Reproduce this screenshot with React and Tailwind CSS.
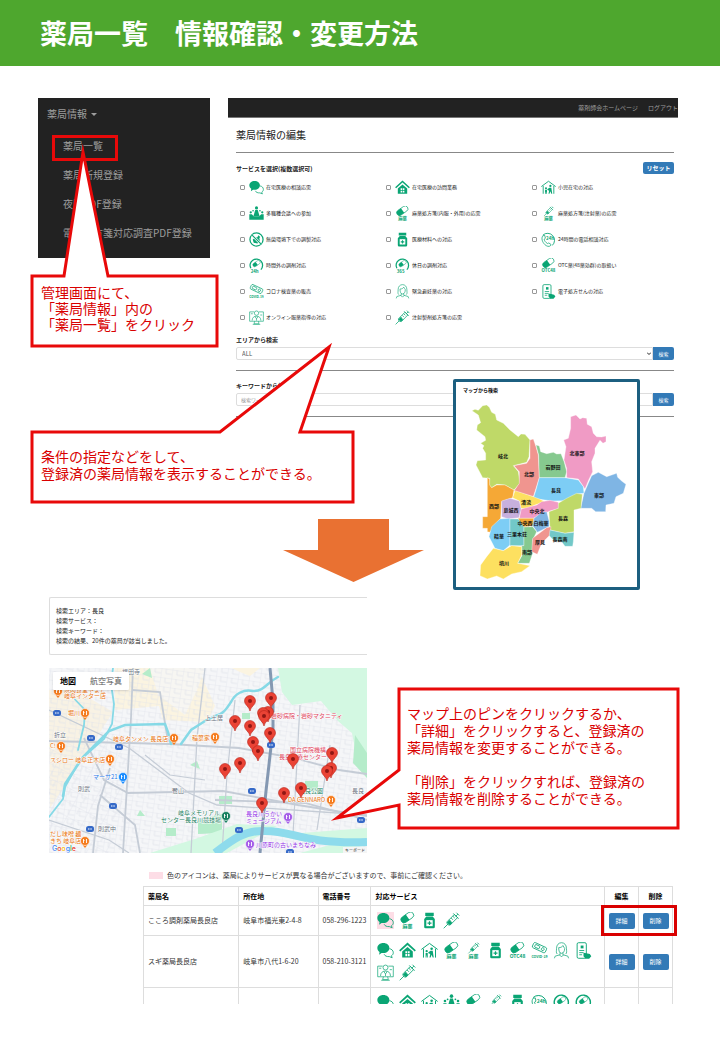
const services = [
  { icon: "chat", label: "在宅医療の相談応需" },
  { icon: "house", label: "在宅医療の訪問業務" },
  { icon: "family", label: "小児在宅の対応" },
  { icon: "meeting", label: "多職種会議への参加" },
  { icon: "capsule", label: "麻薬処方箋(内服・外用)の応需" },
  { icon: "injection", label: "麻薬処方箋(注射薬)の応需" },
  { icon: "sterile", label: "無菌環境下での調製対応" },
  { icon: "bottle", label: "医療材料への対応" },
  { icon: "phone", label: "24時間の電話相談対応" },
  { icon: "overtime", label: "時間外の調剤対応" },
  { icon: "holiday", label: "休日の調剤対応" },
  { icon: "otc", label: "OTC薬(48薬効群)の取扱い" },
  { icon: "covid", label: "コロナ検査薬の販売" },
  { icon: "woman", label: "緊急避妊薬の対応" },
  { icon: "eprescription", label: "電子処方せんの対応" },
  { icon: "online", label: "オンライン服薬指導の対応" },
  { icon: "syringe", label: "注射製剤処方箋の応需" },
];

const pharmacies = [
  {
    name: "こころ調剤薬局長良店",
    address: "岐阜市福光東2-4-8",
    tel: "058-296-1223",
    icons: ["chat", "capsule", "bottle", "syringe"],
    varies: ["chat"],
  },
  {
    name: "スギ薬局長良店",
    address: "岐阜市八代1-6-20",
    tel: "058-210-3121",
    icons: [
      "chat", "house", "family", "capsule", "injection", "bottle",
      "otc", "covid", "woman", "eprescription", "online", "syringe",
    ],
    varies: [],
  },
  {
    name: "",
    address: "",
    tel: "",
    icons: [
      "chat", "house", "family", "meeting", "capsule", "injection",
      "bottle", "phone", "overtime", "holiday",
    ],
    varies: [],
  },
];

// district outlines of the area map, three units to a pixel
const districts = [
  ["#bfd968", "66,107 75,103 85,106 98,92 110,90 118,97 125,112 136,118 140,135 160,145 180,165 205,185 213,177 225,178 240,195 237,245 230,262 190,272 205,290 210,325 192,345 165,330 140,328 125,338 118,330 119,310 98,308 78,270 82,257 107,255 107,235 98,220 102,212 92,205 107,196 105,185 80,165 82,150 92,143 85,120"],
  ["#f0958f", "240,195 250,192 258,215 265,240 268,308 258,340 250,365 192,348 208,325 208,290 192,272 230,265 240,250"],
  ["#86c98f", "258,210 268,213 272,230 290,236 310,232 320,237 333,236 343,262 350,290 345,308 268,308 266,240"],
  ["#f09bc5", "362,125 378,120 390,132 398,128 410,130 412,148 425,155 430,175 440,185 455,186 468,183 468,200 459,205 450,196 435,220 435,235 425,260 428,290 416,315 405,342 385,312 350,308 350,280 342,255 348,215 341,195 355,190 362,160"],
  ["#7dcdf5", "268,308 345,308 385,315 400,335 402,355 380,357 345,377 305,378 250,370 258,345"],
  ["#7fb5e4", "425,302 445,292 470,305 485,300 500,295 503,307 515,318 528,328 520,355 498,365 492,385 468,390 467,410 437,410 425,400 392,400 402,355 415,325"],
  ["#f5a836", "112,308 119,312 119,330 125,338 140,330 165,330 192,345 188,368 155,380 152,430 120,472 112,470 112,460 98,460 98,425 112,425"],
  ["#fde060", "195,347 250,365 270,373 285,380 255,390 230,402 212,400 208,378 188,368"],
  ["#c7b0dd", "155,378 180,370 208,378 214,405 207,428 175,432 155,425"],
  ["#f09bc5", "214,402 260,390 275,380 300,376 325,382 328,400 300,408 250,430 208,430"],
  ["#f5a836", "205,430 252,430 250,452 222,456 205,445"],
  ["#7fb5e4", "252,430 275,412 290,410 298,440 297,455 262,472 248,452"],
  ["#bfd968", "325,385 350,370 380,355 397,358 393,400 372,405 372,470 345,475 300,465 297,410 325,400"],
  ["#7dcdf5", "125,455 150,432 180,430 180,510 160,527 135,520 117,485"],
  ["#72c8c8", "180,432 205,432 222,456 222,512 180,512"],
  ["#86c98f", "222,456 248,455 260,470 248,495 248,535 238,565 203,565 217,540 215,512 222,512"],
  ["#f0958f", "290,458 303,455 300,480 275,505 262,538 245,530 248,490"],
  ["#72c8c8", "300,465 345,475 372,472 370,500 368,514 345,514 335,500 310,495 298,482"],
  ["#fde060", "130,520 160,527 185,512 215,515 215,540 203,565 240,572 215,590 185,597 160,612 140,603 112,612 90,602 92,570 110,545"],
];

const districtNames = [
  ["岐北", 53, 81], ["北部", 79, 99], ["岩野田", 103, 92], ["北東部", 127, 78],
  ["長良", 106, 115], ["東部", 149, 120], ["西部", 44, 131], ["清流", 76, 127],
  ["島城西", 61, 135], ["中央北", 87, 136], ["中央西", 75, 148], ["白梅華", 91, 148],
  ["長森", 113, 143], ["精華", 49, 161], ["三里本荘", 67, 159], ["厚見", 90, 167],
  ["長森南", 110, 164], ["南部", 77, 177], ["境川", 54, 188],
];

const places = [
  ["焼肉食堂やまと", 64, 692, "#e8710a"], ["岐阜インター店", 64, 698, "#e8710a"],
  ["堀川", 68, 715, "#e8710a"], ["折立", 54, 737, "#6b7280"],
  ["岐阜タンメン 長良店", 113, 741, "#e8710a"], ["稲葉家", 192, 740, "#e8710a"],
  ["C!", 50, 748, "#e8710a"], ["スシロー 岐阜正木店", 50, 762, "#e8710a"],
  ["マーサ21", 93, 779, "#1a73e8"], ["則武", 78, 791, "#6b7280"],
  ["鷺山", 172, 793, "#6b7280"], ["則武中", 98, 831, "#6b7280"],
  ["岐阜メモリアル", 178, 815, "#188060"], ["センター長良川競技場", 161, 822, "#188060"],
  ["だし味噌 麺", 50, 836, "#e8710a"], ["きち 岐阜店", 50, 843, "#e8710a"],
  ["上土居", 205, 720, "#6b7280"], ["福田寺", 122, 674, "#6b7280"],
  ["岩砂病院・岩砂マタニティ", 271, 718, "#e0435c"],
  ["国立病院機構", 290, 752, "#e0435c"], ["長良医療センター", 279, 759, "#e0435c"],
  ["長良公園", 299, 793, "#188060"], ["DA GENNARO", 288, 802, "#e8710a"],
  ["長良", 352, 793, "#6b7280"], ["長良川うかい", 246, 816, "#9334e6"],
  ["ミュージアム", 246, 823, "#9334e6"], ["川原町の古いまちなみ", 256, 847, "#9334e6"],
];

const markers = [
  [58, 691, "#f57c1f"], [85, 713, "#f57c1f"], [174, 738, "#f57c1f"], [215, 737, "#f57c1f"],
  [61, 746, "#f57c1f"], [110, 759, "#f57c1f"], [85, 841, "#f57c1f"], [331, 800, "#f57c1f"],
  [123, 777, "#1a8cff"], [226, 816, "#188060"], [288, 817, "#a55ee8"], [250, 844, "#a55ee8"],
];

const shields = [
  [57, 713], [91, 738], [119, 747], [113, 806], [90, 829],
  [271, 745], [252, 791], [239, 830], [361, 820], [290, 852],
];

const pins = [
  [250, 701], [271, 698], [268, 712], [263, 713], [264, 716], [235, 721], [250, 726],
  [270, 733], [253, 742], [258, 751], [293, 759], [332, 753], [331, 768], [327, 771],
  [240, 763], [225, 769], [301, 788], [284, 793], [262, 803],
];

function Capsule() {
  return (
    <g transform="rotate(-35 12 8)">
      <rect x="2" y="3" width="20" height="9" rx="4.500" fill="#fff" stroke="currentColor" strokeWidth="1.100" />
      <path d="M12.500 3H6.500a4.500 4.500 0 0 0 0 9h6z" fill="currentColor" />
    </g>
  );
}

function Needle() {
  return (
    <g fill="none" stroke="currentColor" strokeWidth="1.200">
      <path d="M1 23l6-6M6 17l-.500-3L16 3.500l4.500 4.500L10 18.500 7 18zM14.500 2l7.500 7.500M18 6l3-3M19 1l4 4" />
      <path d="M9 11l2.500 2.500M11.500 8.500L14 11M14 6l2.500 2.500" />
      <path d="M6 15l3-3 3.500 3.500L10 18z" fill="currentColor" />
    </g>
  );
}

function Caption({ children, size = 7 }) {
  return (
    <text x="12" y="23" textAnchor="middle" fontSize={size} fontWeight="700" fill="currentColor">
      {children}
    </text>
  );
}

function TimeRing({ children }) {
  return (
    <>
      <path d="M3 16.500A10 10 0 1 1 19 18.500" fill="none" stroke="currentColor" strokeWidth="2" />
      <g transform="translate(4.500 4) scale(.65)">
        <Capsule />
      </g>
      <text x="9" y="23.500" textAnchor="middle" fontSize="7" fontWeight="700" fill="currentColor">
        {children}
      </text>
    </>
  );
}

const drawings = {
  chat: (
    <>
      <path d="M23 15c0 2.200-1.200 3.500-2.600 4.400l1 2.800-4-1.600c-3.600.3-6.400-1-7.300-3.300" fill="none" stroke="currentColor" strokeWidth="1.200" />
      <path d="M17.500 9.500c3 .2 5.500 2.500 5.500 5.500" fill="none" stroke="currentColor" strokeWidth="1.200" />
      <path d="M9 1.500c5 0 8.500 3 8.500 7s-3.500 7.200-8.500 7.200c-.9 0-1.800-.1-2.600-.3L3 18l.6-4C1.700 12.800.5 10.800.5 8.500c0-4 3.500-7 8.500-7z" fill="currentColor" />
    </>
  ),
  house: (
    <>
      <path d="M1 12.500L12 2.500l11 10" fill="none" stroke="currentColor" strokeWidth="2.400" />
      <path d="M4.500 13.500L12 7l7.500 6.500V22h-15z" fill="currentColor" />
      <path d="M9 13h2.500v3H9zM12.500 13H15v3h-2.500zM9 17h2.500v3H9zM12.500 17H15v3h-2.500z" fill="#fff" />
    </>
  ),
  family: (
    <>
      <path d="M.5 10.500L12 2l11.500 8.500M3.500 9.500V22M20.500 9.500V22" fill="none" stroke="currentColor" strokeWidth="1.400" />
      <g fill="currentColor">
        <circle cx="15" cy="9.500" r="1.800" />
        <path d="M13.500 12.500h3L18 22h-1.500L15 18l-1.500 4H12l1-5-3-1.500.5-1z" />
        <circle cx="8" cy="13" r="1.600" />
        <path d="M6.500 15.500h3V22H8.300v-3h-.6v3H6.500z" />
      </g>
    </>
  ),
  meeting: (
    <g fill="currentColor">
      <circle cx="12" cy="3" r="2.500" />
      <path d="M10 6.500h4l3 10H7z" />
      <circle cx="2.800" cy="10" r="1.800" />
      <circle cx="21.200" cy="10" r="1.800" />
      <circle cx="6.500" cy="7.500" r="1.300" />
      <circle cx="17.500" cy="7.500" r="1.300" />
      <path d="M.5 13h4l3 3.500h9l3-3.500h4v9H.5z" />
    </g>
  ),
  capsule: (
    <>
      <Capsule />
      <Caption>麻薬</Caption>
    </>
  ),
  otc: (
    <>
      <Capsule />
      <Caption>OTC48</Caption>
    </>
  ),
  injection: (
    <>
      <g transform="translate(4 0) scale(.7)">
        <Needle />
      </g>
      <Caption>麻薬</Caption>
    </>
  ),
  syringe: <Needle />,
  sterile: (
    <>
      <circle cx="12" cy="12" r="10.500" fill="none" stroke="currentColor" strokeWidth="2" />
      <path d="M15 5l3 3-1.500 1.500 1 5-4 4-6-1.500-1.500-5 3.500-3 4-.5z" fill="currentColor" />
      <path d="M5 5l14 14" stroke="#fff" strokeWidth="4" />
      <path d="M4.500 4.500l15 15" stroke="currentColor" strokeWidth="1.800" />
    </>
  ),
  bottle: (
    <>
      <path d="M6 1h12v4.500H6zM7.500 6.500h9l3 3.500v11a2 2 0 0 1-2 2h-11a2 2 0 0 1-2-2V10z" fill="currentColor" />
      <path d="M7.500 11.500h9V20h-9z" fill="#fff" />
      <path d="M12 13v5.500M9.200 15.800h5.600" stroke="currentColor" strokeWidth="1.700" />
    </>
  ),
  phone: (
    <>
      <path d="M3 5A11 11 0 1 1 18 21.500" fill="none" stroke="currentColor" strokeWidth="1.400" />
      <path d="M3 6c-3 4-1 10 3 14 3 3 7 4 9 2l1-2-3.500-2.500-2 1C7 16.500 5.500 14 5 11.500L7 10 6 5.500z" fill="#fff" stroke="currentColor" strokeWidth="1.200" />
      <text x="14.500" y="13" textAnchor="middle" fontSize="7" fontWeight="700" fill="currentColor">24h</text>
    </>
  ),
  overtime: <TimeRing>24h</TimeRing>,
  holiday: <TimeRing>365</TimeRing>,
  covid: (
    <>
      <g fill="none" stroke="currentColor" strokeWidth="1.100" transform="rotate(25 12 8)">
        <rect x="2" y="4" width="20" height="8" rx="2" />
        <rect x="5" y="6" width="7" height="4" rx="1" />
        <circle cx="17" cy="8" r="2" />
      </g>
      <Caption size={5}>COVID-19</Caption>
    </>
  ),
  woman: (
    <g fill="none" stroke="currentColor" strokeWidth="1">
      <path d="M6 17c-2-2-1-4-1-8 0-5 3-8 7-8s7 3 7 8c0 4 1 6-1 8" />
      <path d="M8 8c3 0 5-1 6-3 1 2 2 3 2.500 4 0 4-2 7-4.500 7s-4-3-4-8zM10 15v3l-7 2-1 3M14 15v3l7 2 1 3M9 18l3 3 3-3" />
    </g>
  ),
  eprescription: (
    <>
      <rect x="3" y="1" width="13" height="22" rx="2" fill="none" stroke="currentColor" strokeWidth="1.300" />
      <path d="M6 12h7M6 15h6M6 18h4" stroke="currentColor" strokeWidth="1.200" />
      <path d="M8 5h4v4H8z" fill="currentColor" />
      <path d="M12 15l4 1 5 1 2 3-3 3.500h-5L12 20z" fill="currentColor" />
    </>
  ),
  online: (
    <g fill="none" stroke="currentColor" strokeWidth="1">
      <path d="M8 3H1v15h22V3h-7M9 18l-1 4h8l-1-4M6 23h12" />
      <circle cx="12" cy="5" r="3.500" />
      <path d="M5 17c0-5 3-7 7-7s7 2 7 7M9.500 10.500L12 14l2.500-3.500M12 14v3M3 6h3M18 8h3" />
    </g>
  ),
};

function ServiceIcon({ name, className }) {
  return (
    <svg viewBox="0 0 24 24" className={`shrink-0 text-[#0aa574] ${className}`} aria-hidden="true">
      {drawings[name]}
    </svg>
  );
}

function SideMenu() {
  const items = ["薬局一覧", "薬局新規登録", "夜間PDF登録", "電子処方箋対応調査PDF登録"];
  return (
    <nav className="w-[172px] shrink-0 self-start bg-[#222] pt-[9px] pb-[11px] text-[10px] text-[#9d9d9d]">
      <button type="button" className="ml-[9px] flex items-center gap-1 leading-[14px]">
        薬局情報
        <span className="border-x-[3px] border-t-[3px] border-x-transparent border-t-[#9d9d9d]" />
      </button>
      <ul className="mt-[10px]">
        {items.map((item) => (
          <li key={item} className="pl-[25px] leading-[29px] whitespace-nowrap">
            <a href="#">{item}</a>
          </li>
        ))}
      </ul>
    </nav>
  );
}

function SearchPanel() {
  return (
    <section className="min-w-0 flex-1 text-[#222]">
      <div className="flex h-5 items-center justify-end gap-[10px] overflow-hidden border-b border-[#777] bg-[#222] text-[6px] whitespace-nowrap text-[#9d9d9d]">
        <a href="#">薬剤師会ホームページ</a>
        <a href="#">ログアウト</a>
      </div>
      <div className="pr-1 pl-2">
        <h2 className="border-b border-[#888] text-[10px] leading-[34px]">薬局情報の編集</h2>
        <div className="mt-[9px] flex h-3 items-center justify-between">
          <h3 className="text-[6px] font-bold">サービスを選択(複数選択可)</h3>
          <button type="button" className="h-3 w-[31px] rounded-[2px] bg-[#337ab7] text-[6px] leading-3 font-bold text-white">
            リセット
          </button>
        </div>
        <div className="grid grid-cols-3">
          {services.map((service) => (
            <label key={service.label} className="flex h-[26px] items-center pl-1 text-[5px] whitespace-nowrap">
              <input type="checkbox" className="h-[5px] w-[5px] appearance-none rounded-[1px] border border-[#999]" />
              <ServiceIcon name={service.icon} className="ml-1 mr-[2px] h-[15px] w-[15px]" />
              {service.label}
            </label>
          ))}
        </div>
        <form className="mt-[5px] border-b border-[#888] pb-[10px]">
          <label htmlFor="area" className="mb-0.5 block text-[6px] leading-[10px] font-bold">
            エリアから検索
          </label>
          <div className="flex h-[13px]">
            <div className="relative flex-1">
              <select id="area" className="block h-[13px] w-full appearance-none rounded-l-[2px] border border-[#ddd] bg-white pl-[5px] text-[6px] leading-[11px] text-[#555]">
                <option>ALL</option>
              </select>
              <svg viewBox="0 0 4 3" className="absolute top-[5px] right-0.5 h-[3px] w-1">
                <path d="M0 .5l2 2 2-2" fill="none" stroke="#222" />
              </svg>
            </div>
            <button type="button" className="w-[21px] rounded-r-[2px] bg-[#337ab7] text-[5px] text-white">検索</button>
          </div>
        </form>
        <form className="mt-[10px] border-b border-[#888] pb-[10px]">
          <label htmlFor="keyword" className="mb-0.5 block text-[6px] leading-[10px] font-bold">
            キーワードから検索
          </label>
          <div className="flex h-[13px]">
            <input
              id="keyword"
              type="text"
              placeholder="検索ワード"
              className="min-w-0 flex-1 rounded-l-[2px] border border-[#ddd] px-1 text-[5px] placeholder:text-[#999]"
            />
            <button type="button" className="w-[21px] rounded-r-[2px] bg-[#337ab7] text-[5px] text-white">検索</button>
          </div>
        </form>
      </div>
    </section>
  );
}

function AreaMap() {
  return (
    <section className="absolute top-[379px] left-[453px] w-[187px] rounded-[2px] border-[3px] border-[#1c5f80] bg-white">
      <h3 className="mt-1 pl-[7px] text-[5px] leading-[8px] font-bold text-black">マップから検索</h3>
      <svg viewBox="6 19 181 193" className="block w-full">
        <g transform="scale(.3333)" stroke="#fff" strokeOpacity=".7" strokeWidth="1.500" strokeLinejoin="round">
          {districts.map(([color, points]) => (
            <polygon key={points} points={points} fill={color} />
          ))}
        </g>
        <g fontSize="5" fontWeight="700" fill="#111" textAnchor="middle">
          {districtNames.map(([name, x, y]) => (
            <text key={name} x={x} y={y + 2}>{name}</text>
          ))}
        </g>
      </svg>
    </section>
  );
}

function CityMap() {
  return (
    <div className="relative mt-[13px]">
      <svg viewBox="49 668 318 185" preserveAspectRatio="xMidYMid slice" className="block w-full">
        <defs>
          <pattern id="streets" width="11" height="9" patternUnits="userSpaceOnUse" patternTransform="rotate(8)">
            <path d="M0 0H11M0 0V9M5 0V5M5 5H11" fill="none" stroke="#dfe3e9" strokeWidth=".7" />
          </pattern>
          <pattern id="blocks" width="17" height="13" patternUnits="userSpaceOnUse" patternTransform="rotate(28)">
            <path d="M0 0H17M0 0V13M8 0V7" fill="none" stroke="#dfe3e9" strokeWidth=".7" />
          </pattern>
        </defs>
        <rect x="49" y="668" width="318" height="185" fill="#f5f6f8" />
        <path d="M49 690l30 2 34 20-18 28-45 68z" fill="#f8f2e4" />
        <path d="M115 668h83l17 38-8 16-44-2-4-14-44 4z" fill="#fbf4e1" />
        <path d="M150 668h55l-8 22-12 25-27-20z" fill="#f7f6f2" />
        <path d="M49 668h318v185H49z" fill="url(#streets)" />
        <path d="M49 740h90l-30 113H49z" fill="url(#blocks)" />
        <g fill="#d3f8e2">
          <path d="M278 668l4 24 10 13 29-4 17 20 14 12 6 30 9 15V668z" />
          <path d="M232 668h28l-10 8-10-4z" fill="#fbf4e1" />
          <path d="M198 820l24-6v19l-24 1zM219 796h13v8h-13zM242 713h8v6h-8zM305 781h13v11h-13zM166 828h10v8h-10z" fill="#b5ecca" />
          <path d="M150 853l45-14 42-15 40 2-50 27zM275 835l92-7v12l-60 2z" />
          <path d="M150 668l-8 6 10 4zM190 765l7-4 3 8zM140 810l5 6h-8z" fill="#b5ecca" />
          <path d="M355 735l12 18v25l-14-15z" fill="#b5ecca" />
          <path d="M300 853l30-8 37 2v6z" />
        </g>
        <g fill="none" stroke="#c5ccd6" strokeWidth="1.800">
          <path d="M133 668l-2 50-8 135" />
          <path d="M49 710l80 38 60 45 28 12 150 10" strokeWidth="1.300" />
          <path d="M49 741l120 3 70 4 55 10 45 12 28 4" />
          <path d="M132 690l28 2 8 50" />
          <path d="M84 738l20 42 24 13 95-2 75 14 69 11" />
          <path d="M110 768l-12 38-5 47" />
          <path d="M100 795l35 30 5 28" />
          <path d="M205 668l-8 70-6 115" strokeWidth="1.300" />
          <path d="M235 700l-8 75-5 78M300 705l-7 130M330 745l-13 85" strokeWidth="1.200" />
          <path d="M215 800l90 3 62 17" />
          <path d="M49 820l60 20 20 13M145 755l25 20 35 5" strokeWidth="1.200" />
        </g>
        <g fill="none" stroke="#86d9e6" strokeWidth="1.800" strokeLinecap="round">
          <path d="M113 668l-2 16 3 20-2 20-8 15-24 21-15 27-2 12-14 18" />
          <path d="M171 744l-3-12-3-8-40 1-16 6-20 20-6 6-18 27-2 12" strokeWidth="2.500" />
          <path d="M66 690l19 20-1 15-6 25" />
          <path d="M181 744l10-14 14-9 10-5c8-1 12-8 16-14 4-8 12-13 22-11 12 0 13-8 25-14" strokeWidth="2.500" />
        </g>
        <path d="M215 853c18-14 30-23 50-22 30 0 35 13 102 11" fill="none" stroke="#8edbec" strokeWidth="8" />
        <path d="M270 668l3 33v28l-7 62-6 62" fill="none" stroke="#8498b2" strokeWidth="3" />
        {shields.map(([x, y]) => (
          <g key={`${x}-${y}`}>
            <rect x={x - 4} y={y - 3} width="8" height="6" rx="2.500" fill="#3569c8" />
            <path d={`M${x - 2} ${y}h4`} stroke="#fff" strokeWidth="1.200" strokeDasharray="1.500 .8" />
          </g>
        ))}
        <g fontSize="6" stroke="#fff" strokeWidth="1" paintOrder="stroke" strokeLinejoin="round">
          {places.map(([name, x, y, color]) => (
            <text key={`${name}-${x}-${y}`} x={x} y={y} fill={color}>{name}</text>
          ))}
        </g>
        {markers.map(([x, y, color]) => (
          <g key={`${x}-${y}`}>
            <path d={`M${x - 4} ${y + 2}L${x} ${y + 7}l4-5z`} fill={color} />
            <circle cx={x} cy={y} r="4.500" fill={color} stroke="#fff" strokeWidth=".6" />
            <path d={`M${x - 1.5} ${y - 2}v4M${x + 1.5} ${y - 2}v4M${x - 2} ${y - 0.5}h1.500`} stroke="#fff" strokeWidth=".9" />
          </g>
        ))}
        {pins.map(([x, y]) => (
          <g key={`${x}-${y}`} transform={`translate(${x} ${y})`}>
            <path d="M0 10C-.8 5.500-5.500 4-5.500 0a5.500 5.500 0 0 1 11 0C5.500 4 .8 5.500 0 10z" fill="#ea4335" stroke="#b8231a" strokeWidth=".6" />
            <circle r="2" fill="#8f1713" />
          </g>
        ))}
        <g fontSize="7" fontWeight="500" stroke="#fff" strokeWidth=".8" paintOrder="stroke">
          <text x="52" y="851" fontFamily="Inter, sans-serif">
            <tspan fill="#4285f4">G</tspan>
            <tspan fill="#ea4335">o</tspan>
            <tspan fill="#fbbc04">o</tspan>
            <tspan fill="#4285f4">g</tspan>
            <tspan fill="#34a853">l</tspan>
            <tspan fill="#ea4335">e</tspan>
          </text>
        </g>
        <rect x="343" y="847" width="24" height="6" fill="#f5f5f5" />
        <text x="345" y="852" fontSize="4" fill="#111">キーボード</text>
      </svg>
      <div className="absolute top-1 left-1 flex h-[18px] items-center gap-[14px] rounded-[1px] bg-white px-[7px] text-[8px] text-[#565656] shadow-sm">
        <button type="button" className="font-bold text-black">地図</button>
        <button type="button">航空写真</button>
      </div>
    </div>
  );
}

function PharmacyTable() {
  const cell = "border border-[#ddd] px-1";
  return (
    <section className="mt-4 mr-[5px] ml-[105px] text-[7px] text-[#333]">
      <p className="flex items-center gap-1 pl-[6px] leading-3">
        <span className="h-[7px] w-[14px] bg-[#fddde6]" />
        色のアイコンは、薬局によりサービスが異なる場合がございますので、事前にご確認ください。
      </p>
      {/* only the top of the list is shown */}
      <div className="mt-[5px] h-[118px] overflow-hidden">
        <table className="w-full table-fixed border-collapse text-left">
          <thead>
            <tr className="h-[19px] text-black">
              <th className={`${cell} w-[18%]`}>薬局名</th>
              <th className={`${cell} w-[15%]`}>所在地</th>
              <th className={`${cell} w-[10%]`}>電話番号</th>
              <th className={cell}>対応サービス</th>
              <th className={`${cell} w-[34px] text-center`}>編集</th>
              <th className={`${cell} w-[34px] text-center`}>削除</th>
            </tr>
          </thead>
          <tbody>
            {pharmacies.map((pharmacy, index) => (
              <tr key={index}>
                <td className={cell}>{pharmacy.name}</td>
                <td className={cell}>{pharmacy.address}</td>
                <td className={`${cell} whitespace-nowrap`}>{pharmacy.tel}</td>
                <td className="border border-[#ddd] px-[6px] py-[6px]">
                  <div className="flex flex-wrap gap-[5px]">
                    {pharmacy.icons.map((icon) => (
                      <span key={icon} className={pharmacy.varies.includes(icon) ? "bg-[#fddde6]" : ""}>
                        <ServiceIcon name={icon} className="block h-[17px] w-[17px]" />
                      </span>
                    ))}
                  </div>
                </td>
                {["詳細", "削除"].map((action) => (
                  <td key={action} className="border border-[#ddd] text-center">
                    {pharmacy.name && (
                      <button type="button" className="h-4 w-[26px] rounded-[2px] bg-[#337ab7] text-[6px] text-white">
                        {action}
                      </button>
                    )}
                  </td>
                ))}
              </tr>
            ))}
          </tbody>
        </table>
      </div>
    </section>
  );
}

function Callout({ points, className, children }) {
  return (
    <div className={`absolute text-[14px] text-[#d90000] ${className}`}>
      <svg className="absolute inset-0 h-full w-full overflow-visible" aria-hidden="true">
        <polygon points={points} fill="#fff" stroke="#e80909" strokeWidth="3" strokeMiterlimit="20" />
      </svg>
      <p className="relative whitespace-pre-line">{children}</p>
    </div>
  );
}

export default function App() {
  return (
    <div
      lang="ja"
      className="relative min-h-screen w-full overflow-hidden bg-white pb-9 font-['Noto_Sans_CJK_JP',sans-serif]"
    >
      <header className="bg-[#4ea72e] pl-10">
        <h1 className="text-[27px] leading-[66px] font-bold whitespace-nowrap text-white">
          薬局一覧　情報確認・変更方法
        </h1>
      </header>

      <main className="pt-8 pr-[42px] pl-[38px]">
        <div className="flex gap-[18px]">
          <SideMenu />
          <SearchPanel />
        </div>

        <svg viewBox="0 0 141 63" className="mt-[102px] ml-[245px] h-[63px] w-[141px]" aria-hidden="true">
          <path d="M35 0h71v31h35L70.500 63 0 31h35z" fill="#e97132" />
        </svg>

        <section className="mt-[15px] ml-[11px] w-1/2 pr-0.5">
          <div className="rounded-l-[2px] border border-r-0 border-[#ddd] px-[6px] py-2 text-[6px] leading-[10px] text-[#222]">
            <p>検索エリア：長良</p>
            <p>検索サービス：</p>
            <p>検索キーワード：</p>
            <p>検索の結果、20件の薬局が該当しました。</p>
          </div>
          <CityMap />
        </section>

        <PharmacyTable />
      </main>

      <AreaMap />

      <div className="absolute top-[135px] left-[52px] h-[26px] w-[66px] border-[3px] border-[#e80909]" />
      <div className="absolute top-[905px] left-[601px] h-[31px] w-[76px] border-[3px] border-[#d90000]" />

      <Callout
        className="top-[274px] left-[30px] h-[74px] w-[189px] pt-[10px] pl-[11px] leading-4"
        points="2,2 34,2 53,-122 78,2 187,2 187,72 2,72"
      >
        {"管理画面にて、\n「薬局情報」内の\n「薬局一覧」をクリック"}
      </Callout>
      <Callout
        className="top-[430px] left-[30px] h-[74px] w-[325px] pt-[18px] pl-[11px] leading-[17px]"
        points="2,2 190,2 299,-83 270,2 323,2 323,72 2,72"
      >
        {"条件の指定などをして、\n登録済の薬局情報を表示することができる。"}
      </Callout>
      <Callout
        className="top-[687px] left-[397px] h-[143px] w-[283px] pt-[18px] pl-[10px] leading-[17px]"
        points="2,2 281,2 281,141 2,141 2,118 -60,131 2,83"
      >
        {"マップ上のピンをクリックするか、\n「詳細」をクリックすると、登録済の\n薬局情報を変更することができる。\n\n「削除」をクリックすれば、登録済の\n薬局情報を削除することができる。"}
      </Callout>
    </div>
  );
}
